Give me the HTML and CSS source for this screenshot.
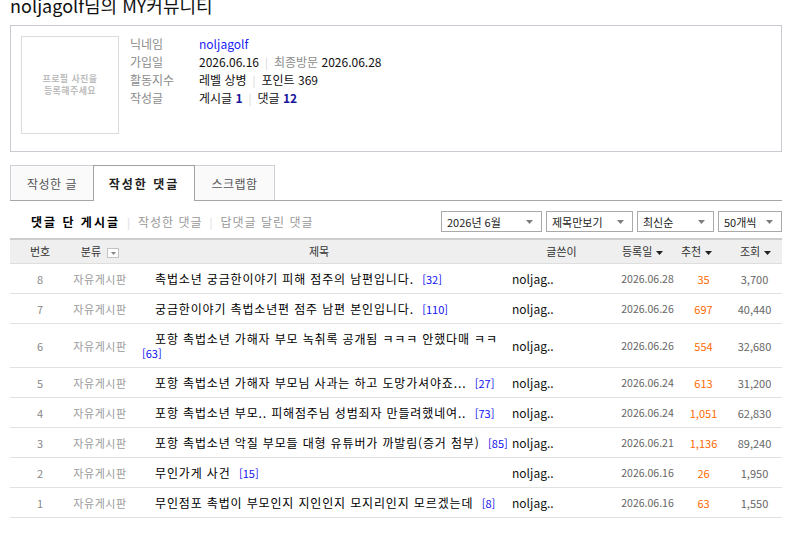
FILE: index.html
```html
<!DOCTYPE html>
<html lang="ko">
<head>
<meta charset="utf-8">
<title>noljagolf님의 MY커뮤니티</title>
<link rel="stylesheet" href="styles.css">
</head>
<body>
<div class="page">
  <h1 class="page-title">noljagolf님의 MY커뮤니티</h1>

  <section class="profile">
    <div class="photo"><span>프로필 사진을<br>등록해주세요</span></div>
    <dl class="info">
      <div class="info-row"><dt>닉네임</dt><dd><a class="nick">noljagolf</a></dd></div>
      <div class="info-row"><dt>가입일</dt><dd>2026.06.16<span class="sep">|</span><span class="muted">최종방문</span> 2026.06.28</dd></div>
      <div class="info-row"><dt>활동지수</dt><dd>레벨 상병<span class="sep">|</span>포인트 369</dd></div>
      <div class="info-row"><dt>작성글</dt><dd>게시글 <b class="num">1</b><span class="sep">|</span>댓글 <b class="num">12</b></dd></div>
    </dl>
  </section>

  <ul class="tabs">
    <li class="tab t1">작성한 글</li>
    <li class="tab t2 active">작성한 댓글</li>
    <li class="tab t3">스크랩함</li>
  </ul>

  <div class="toolbar">
    <div class="subtabs">
      <span class="sub on">댓글 단 게시글</span><span class="sub-sep">|</span><span class="sub">작성한 댓글</span><span class="sub-sep">|</span><span class="sub">답댓글 달린 댓글</span>
    </div>
    <div class="filters">
      <div class="select s1"><span>2026년 6월</span><svg class="sel-arrow" width="7" height="4" viewBox="0 0 7 4"><path d="M0 0H7L3.5 4Z"/></svg></div>
      <div class="select s2"><span>제목만보기</span><svg class="sel-arrow" width="7" height="4" viewBox="0 0 7 4"><path d="M0 0H7L3.5 4Z"/></svg></div>
      <div class="select s3"><span>최신순</span><svg class="sel-arrow" width="7" height="4" viewBox="0 0 7 4"><path d="M0 0H7L3.5 4Z"/></svg></div>
      <div class="select s4"><span>50개씩</span><svg class="sel-arrow" width="7" height="4" viewBox="0 0 7 4"><path d="M0 0H7L3.5 4Z"/></svg></div>
    </div>
  </div>

  <table class="list">
    <colgroup>
      <col class="c-no"><col class="c-cat"><col class="c-title"><col class="c-writer"><col class="c-date"><col class="c-rec"><col class="c-view">
    </colgroup>
    <thead>
      <tr>
        <th>번호</th>
        <th>분류 <span class="filter-btn"><svg width="5" height="3" viewBox="0 0 5 3"><path d="M0 0H5L2.5 3Z"/></svg></span></th>
        <th>제목</th>
        <th>글쓴이</th>
        <th class="h-date">등록일 <svg class="sort" width="7" height="4" viewBox="0 0 7 4"><path d="M0 0H7L3.5 4Z"/></svg></th>
        <th class="h-rec">추천 <svg class="sort" width="7" height="4" viewBox="0 0 7 4"><path d="M0 0H7L3.5 4Z"/></svg></th>
        <th class="h-view">조회 <svg class="sort" width="7" height="4" viewBox="0 0 7 4"><path d="M0 0H7L3.5 4Z"/></svg></th>
      </tr>
    </thead>
    <tbody>
      <tr><td class="no">8</td><td class="cat">자유게시판</td><td class="title">촉법소년 궁금한이야기 피해 점주의 남편입니다.&nbsp; <span class="cmt">[32]</span></td><td class="writer">noljag..</td><td class="date">2026.06.28</td><td class="rec">35</td><td class="view">3,700</td></tr>
      <tr><td class="no">7</td><td class="cat">자유게시판</td><td class="title">궁금한이야기 촉법소년편 점주 남편 본인입니다.&nbsp; <span class="cmt">[110]</span></td><td class="writer">noljag..</td><td class="date">2026.06.26</td><td class="rec">697</td><td class="view">40,440</td></tr>
      <tr><td class="no">6</td><td class="cat">자유게시판</td><td class="title">포항 촉법소년 가해자 부모 녹취록 공개됨 ㅋㅋㅋ 안했다매 ㅋㅋ&nbsp; <span class="cmt">[63]</span></td><td class="writer">noljag..</td><td class="date">2026.06.26</td><td class="rec">554</td><td class="view">32,680</td></tr>
      <tr><td class="no">5</td><td class="cat">자유게시판</td><td class="title">포항 촉법소년 가해자 부모님 사과는 하고 도망가셔야죠...&nbsp; <span class="cmt">[27]</span></td><td class="writer">noljag..</td><td class="date">2026.06.24</td><td class="rec">613</td><td class="view">31,200</td></tr>
      <tr><td class="no">4</td><td class="cat">자유게시판</td><td class="title">포항 촉법소년 부모.. 피해점주님 성범죄자 만들려했네여..&nbsp; <span class="cmt">[73]</span></td><td class="writer">noljag..</td><td class="date">2026.06.24</td><td class="rec">1,051</td><td class="view">62,830</td></tr>
      <tr><td class="no">3</td><td class="cat">자유게시판</td><td class="title">포항 촉법소년 악질 부모들 대형 유튜버가 까발림(증거 첨부)&nbsp; <span class="cmt">[85]</span></td><td class="writer">noljag..</td><td class="date">2026.06.21</td><td class="rec">1,136</td><td class="view">89,240</td></tr>
      <tr><td class="no">2</td><td class="cat">자유게시판</td><td class="title">무인가게 사건&nbsp; <span class="cmt">[15]</span></td><td class="writer">noljag..</td><td class="date">2026.06.16</td><td class="rec">26</td><td class="view">1,950</td></tr>
      <tr><td class="no">1</td><td class="cat">자유게시판</td><td class="title">무인점포 촉법이 부모인지 지인인지 모지리인지 모르겠는데&nbsp; <span class="cmt">[8]</span></td><td class="writer">noljag..</td><td class="date">2026.06.16</td><td class="rec">63</td><td class="view">1,550</td></tr>
    </tbody>
  </table>
</div>
</body>
</html>
```

FILE: styles.css
```css
* { box-sizing: border-box; }

body {
  margin: 0;
  background: #fff;
  color: #000;
  font-family: "Noto Sans CJK KR", "Noto Sans", sans-serif;
  font-size: 12px;
}

.page {
  width: 772px;
  margin-left: 10px;
}

.page-title {
  margin: -5px 0 0;
  font-size: 18px;
  line-height: 20px;
  font-weight: normal;
  color: #111;
}

/* profile */
.profile {
  display: flex;
  align-items: flex-start;
  margin-top: 10px;
  height: 127px;
  padding: 10px 10px 17px;
  border: 1px solid #cacad3;
}

.photo {
  width: 98px;
  height: 98px;
  flex: none;
  border: 1px solid #dcdcdc;
  display: flex;
  align-items: center;
  justify-content: center;
  text-align: center;
  font-size: 9px;
  line-height: 12px;
  letter-spacing: 0.4px;
  font-weight: bold;
  color: #bdbdbd;
}

.info {
  margin: -1px 0 0 11px;
  line-height: 18px;
}

.info-row { display: flex; }

.info dt {
  width: 69px;
  color: #8c8c8c;
}

.info dd { margin: 0; color: #111; }

.info .sep {
  color: #d6d6d6;
  margin: 0 6px;
  font-size: 11px;
}

.info .muted { color: #8c8c8c; }

.nick { color: #1a1af5; text-decoration: none; }

.num { color: #16169c; font-weight: bold; }

/* tabs */
.tabs {
  list-style: none;
  margin: 13px 0 0;
  padding: 0;
  display: flex;
  align-items: flex-end;
  border-bottom: 1px solid #a6a6a6;
}

.tab {
  height: 35px;
  margin-left: -1px;
  border: 1px solid #cfcfd7;
  border-bottom: 0;
  background: #fafafb;
  color: #555;
  letter-spacing: 0.5px;
  display: flex;
  align-items: center;
  justify-content: center;
}

.t1 { width: 84px; margin-left: 0; }
.t2 { width: 102px; }
.t3 { width: 81px; }

.tab.active {
  position: relative;
  z-index: 1;
  height: 36px;
  margin-bottom: -1px;
  background: #fff;
  border-color: #a2a2a2;
  color: #222;
  font-weight: bold;
  letter-spacing: 2px;
}

/* toolbar */
.toolbar {
  margin-top: 10px;
  height: 21px;
  display: flex;
  align-items: center;
  justify-content: space-between;
}

.subtabs {
  padding-left: 21px;
  display: flex;
  align-items: center;
}

.sub { color: #999; letter-spacing: 1px; }

.sub.on {
  color: #000;
  font-weight: bold;
  letter-spacing: 2px;
}

.sub-sep {
  color: #dadada;
  font-size: 11px;
  margin: 0 8px 0 7px;
}

.filters {
  display: flex;
  gap: 4px;
}

.select {
  height: 21px;
  border: 1px solid #aaa;
  background: #fff;
  display: flex;
  align-items: center;
  justify-content: space-between;
  padding: 0 8px 0 5px;
  font-size: 11px;
  color: #222;
}

.s1 { width: 101px; }
.s2 { width: 87px; }
.s3 { width: 77px; }
.s4 { width: 64px; }

.sel-arrow { fill: #7d7d7d; flex: none; }

/* table */
.list {
  width: 772px;
  margin-top: 6px;
  border-collapse: collapse;
  table-layout: fixed;
}

.c-no { width: 60px; }
.c-cat { width: 60px; }
.c-title { width: 378px; }
.c-writer { width: 107px; }
.c-date { width: 65px; }
.c-rec { width: 47px; }
.c-view { width: 55px; }

.list th {
  padding: 4px 0;
  line-height: 15px;
  background: #efefef;
  border-top: 2px solid #cdcdcd;
  border-bottom: 1px solid #dedede;
  font-size: 11px;
  font-weight: normal;
  color: #333;
  text-align: center;
  white-space: nowrap;
}

.list th.h-date { text-align: left; padding-left: 7px; }
.list th.h-rec { text-align: left; padding-left: 1px; }
.list th.h-view { text-align: left; padding-left: 13px; }

.sort {
  fill: #222;
  vertical-align: middle;
  margin-left: 1px;
}

.filter-btn {
  display: inline-flex;
  align-items: center;
  justify-content: center;
  width: 12px;
  height: 10px;
  margin-left: 3px;
  vertical-align: middle;
  border: 1px solid #c4c4c4;
  background: #fff;
  fill: #888;
}

.list td {
  padding: 7.5px 0;
  line-height: 14px;
  border-bottom: 1px solid #e2e2e2;
  text-align: center;
  vertical-align: middle;
}

.list td.no { font-size: 11px; color: #888; }
.list td.cat { font-size: 11px; color: #9a9a9a; letter-spacing: 0.6px; }

.list td.title {
  text-align: left;
  padding-left: 12px;
  padding-right: 0;
  text-indent: 13px;
  letter-spacing: 0.85px;
  color: #000;
}

.cmt {
  font-size: 11px;
  line-height: 10px;
  letter-spacing: 0;
  color: #1010f0;
}

.list td.writer { text-align: left; padding-left: 4px; color: #111; }
.list td.date { font-size: 10.5px; color: #666; }
.list td.rec { font-size: 11px; color: #ff6a00; }
.list td.view { font-size: 11px; color: #666; }
```
